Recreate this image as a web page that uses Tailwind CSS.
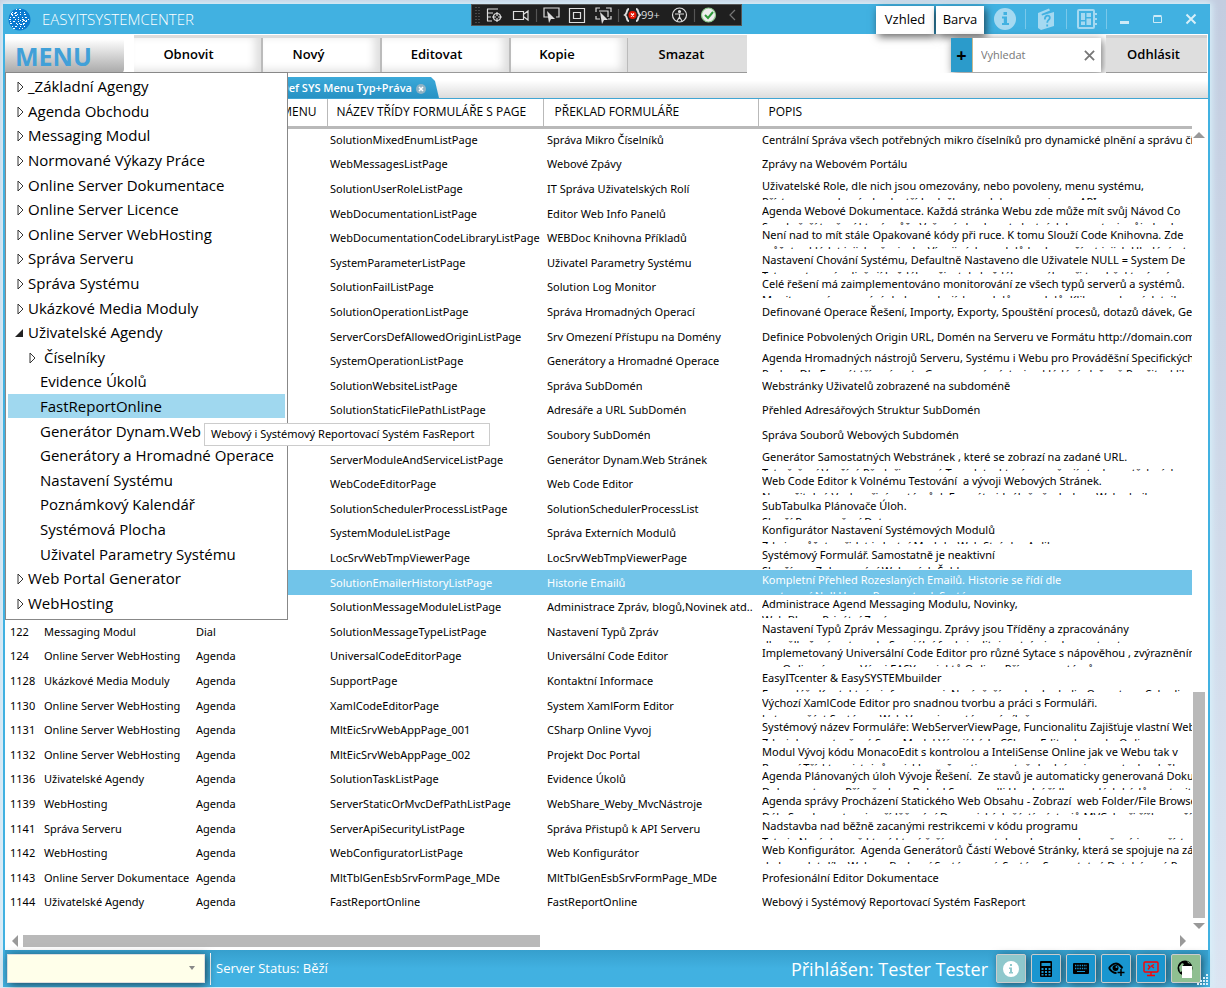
<!DOCTYPE html>
<html lang="cs">
<head>
<meta charset="utf-8">
<title>EASYITSYSTEMCENTER</title>
<meta name="viewport" content="width=device-width, initial-scale=1">
<script src="https://cdn.jsdelivr.net/npm/@tailwindcss/browser@4"></script>
</head>
<body class="h-screen overflow-hidden bg-linear-to-b from-[#c3cde0] to-[#dbe5f2] pt-1 pr-4 pb-px pl-[3px] font-['Open_Sans','Noto_Sans',sans-serif] text-xs text-black">
<div class="relative flex h-full flex-col border-x-2 border-[#41b1e1] bg-white shadow-[0_0_7px_2px_#d8f2fb]">

  <header class="flex h-[30px] shrink-0 items-center bg-[#41b1e1] text-white">
    <svg class="ml-[3px] size-[23px]" viewBox="0 0 23 23">
      <circle cx="11.500" cy="11.500" r="11" fill="#0c7bd0"/>
      <g fill="none" stroke="#fff" stroke-width="1">
        <path d="M8 1.500h8M4 4.500h15M2 9.500h19M2 13.500h20M4 18.500h15" stroke-dasharray="1 2 2 3 1 3"/>
        <path d="M3 6.500h17M1 11.500h21M2 15.500h18M5 20.500h13" stroke-dasharray="2 4 1 2 1 3"/>
        <path d="M3 5.500h6M4 7.500h5M12 12.500h8M9 16.500h9" stroke-dasharray="1 2 2 1"/>
      </g>
    </svg>
    <h1 class="ml-[11px] text-[15px] font-light">EASYITSYSTEMCENTER</h1>
    <div class="ml-auto flex h-full items-center text-white/60">
      <button class="mt-px h-7 w-[58px] bg-white text-[13px] text-black shadow-[2px_3px_8px_#0009]">Vzhled</button>
      <button class="mt-px ml-[2px] h-7 w-[48px] bg-white text-[13px] text-black shadow-[2px_3px_8px_#0009]">Barva</button>
      <button aria-label="Informace" class="flex h-5 w-[42px] items-center justify-center border-r border-white/30"><svg class="size-[22px] shrink-0 text-[#a5d9f1]" viewBox="0 0 22 22"><circle cx="11" cy="11" r="11" fill="currentColor"/><path d="M9.500 4h3.500v3H9.500zM8 8.500h5V15h2v2H8v-2h1.800v-4.500H8z" fill="#41b1e1"/></svg></button>
      <button aria-label="Nápověda" class="flex h-5 w-[41px] items-center justify-center border-r border-white/30"><svg class="size-[22px] shrink-0" viewBox="0 0 22 22"><path d="M3 5 14 .5l1 2L6.500 6l.5 1.500L19 4v14L6 22l-3-2z" fill="#a5d9f1"/><path d="M9.800 11.500c0-4.500 5-5 5-1.800 0 2.300-2.600 2-2.600 5m0 1.800v2" fill="none" stroke="#41b1e1" stroke-width="1.800"/></svg></button>
      <button aria-label="Moduly" class="flex h-5 w-[40px] items-center justify-center border-r border-white/30"><svg class="size-[22px] shrink-0" viewBox="0 0 22 22" fill="none" stroke="#a5d9f1" stroke-width="2"><rect x="2" y="2" width="16" height="18" rx="1"/><path d="M18 6h3M18 11h3M18 16h3"/><path d="M5 5h4v7H5zM10.500 5H15v4h-4.500zM5 13.500h4V17H5zM10.500 10.500H15V17h-4.500z" fill="#a5d9f1" stroke="none"/></svg></button>
      <button aria-label="Minimalizovat" class="flex w-[35px] justify-center"><svg class="size-3" viewBox="0 0 12 12"><path d="M1 8h9v3H1z" fill="#cdeaf7"/></svg></button>
      <button aria-label="Maximalizovat" class="flex w-[32px] justify-center"><svg class="size-3" viewBox="0 0 12 12" fill="none" stroke="#cdeaf7"><path d="M1.500 3.500h8v6h-8zM1.500 2.500h8"/></svg></button>
      <button aria-label="Zavřít" class="flex w-[34px] justify-center"><svg class="size-3" viewBox="0 0 12 12" fill="none" stroke="#d8eff9" stroke-width="2"><path d="m1.500 1.500 9 9m0-9-9 9"/></svg></button>
    </div>
  </header>

  <nav class="flex h-[39px] shrink-0 items-stretch pt-px text-[13px] font-semibold">
    <button class="mt-1 w-[119px] rounded-br bg-linear-to-b from-white to-[#a9a9a9] pl-[10px] text-left text-[25px] leading-8 font-bold text-[#41a0d8]">MENU</button>
    <div class="ml-[10px] flex border-t-3 border-b border-t-[#dcdcdc] border-b-[#999]">
      <button class="w-[129px] border-r-2 border-[#bbb] pr-[18px] shadow-[inset_-6px_-2px_8px_#0002]">Obnovit</button>
      <button class="w-[119px] border-r-2 border-[#bbb] pr-[26px] shadow-[inset_-6px_-2px_8px_#0002]">Nový</button>
      <button class="w-[129px] border-r-2 border-[#bbb] pr-[18px] shadow-[inset_-6px_-2px_8px_#0002]">Editovat</button>
      <button class="w-[117px] border-r border-[#bbb] pr-6 shadow-[inset_-6px_-2px_8px_#0002]">Kopie</button>
      <button class="w-[119px] bg-[#dedede] pr-3">Smazat</button>
    </div>
    <div class="my-[3px] mr-[5px] ml-auto flex h-[34px] w-[150px] shadow-[2px_2px_9px_#0008]">
      <button class="w-[22px] border-r border-[#c9b98f] bg-[#2b9bcb] text-lg leading-none font-bold">+</button>
      <label class="sr-only" for="q">Vyhledat</label>
      <input id="q" class="w-0 flex-1 bg-white pl-2 text-[11px] font-normal placeholder:text-[#777]" placeholder="Vyhledat">
      <button aria-label="Vymazat" class="flex w-6 items-center justify-center bg-white"><svg class="size-[11px]" viewBox="0 0 12 12" fill="none" stroke="#777" stroke-width="2"><path d="m1 1 10 10M11 1 1 11"/></svg></button>
    </div>
    <button class="mr-px w-[101px] border-t-3 border-b border-t-[#d0d0d0] border-b-[#999] bg-[#dedede] pr-[6px]">Odhlásit</button>
  </nav>

  <div class="flex h-[26px] shrink-0 items-end border-b border-[#41a5d3] bg-linear-to-b from-white from-30% to-[#dcdcdc]">
    <div class="flex h-[21px] w-[434px] items-center justify-end gap-1 bg-linear-to-b from-[#3ba9d9] to-[#2792c4] pt-[2px] pr-[13px] font-semibold text-white [clip-path:polygon(0_0,426px_0,430px_4px,434px_100%,0_100%)]">
      <span class="whitespace-nowrap text-[11px]">Def SYS Menu Typ+Práva</span>
      <button aria-label="Zavřít kartu"><svg class="size-[10px]" viewBox="0 0 10 10"><circle cx="5" cy="5" r="5" fill="#8fb3c5"/><path d="m3 3 4 4m0-4L3 7" stroke="#fff" stroke-width="1.500"/></svg></button>
    </div>
  </div>

  <main class="flex min-h-0 flex-1">
    <div class="flex min-w-0 flex-1 flex-col">
      <div class="min-w-0 overflow-hidden">
        <table class="w-full table-fixed border-collapse text-left font-['Noto_Sans','Open_Sans',sans-serif] text-[11px] whitespace-nowrap">
          <colgroup><col class="w-[36px]"><col class="w-[152px]"><col class="w-[134px]"><col class="w-[216px]"><col class="w-[215px]"><col></colgroup>
          <thead>
            <tr class="h-7 border-b-3 border-[#b9b9b9] font-['Open_Sans','Noto_Sans',sans-serif] text-xs [&>th]:font-medium">
              <th></th><th></th><th class="pr-[10px] text-right">MENU</th>
              <th class="border-l border-[#b9b9b9] pl-[9px]">NÁZEV TŘÍDY FORMULÁŘE S PAGE</th>
              <th class="border-l border-[#b9b9b9] pl-[11px]">PŘEKLAD FORMULÁŘE</th>
              <th class="border-l border-[#b9b9b9] pl-[10px]">POPIS</th>
            </tr>
          </thead>
          <tbody id="rows"></tbody>
        </table>
      </div>
      <div class="mt-auto mb-[3px] flex h-3 items-center">
        <svg class="ml-[7px] h-3 w-2" viewBox="0 0 8 12"><path d="M6 0v12L0 6z" fill="#999"/></svg>
        <div class="ml-[3px] h-3 w-[517px] bg-[#b9b9b9]"></div>
        <svg class="mr-1 ml-auto h-3 w-2" viewBox="0 0 8 12"><path d="M0 0v12l6-6z" fill="#999"/></svg>
      </div>
    </div>
    <div class="flex w-4 shrink-0 flex-col items-start pt-[33px] pb-[21px] pl-px">
      <svg class="h-[6px] w-3" viewBox="0 0 12 6"><path d="M0 6 6 0l6 6z" fill="#999"/></svg>
      <div class="mt-auto h-[226px] w-3 bg-[#b9b9b9]"></div>
      <svg class="mt-[5px] h-[6px] w-3" viewBox="0 0 12 6"><path d="M0 0h12L6 6z" fill="#999"/></svg>
    </div>
  </main>

  <footer class="flex h-[37px] shrink-0 items-center bg-linear-to-b from-[#369fcd] to-[#41b1e1] to-50% text-white">
    <label class="sr-only" for="sel">Výběr</label>
    <div class="relative ml-[2px] h-[29px] w-[198px] shadow-[2px_2px_9px_#0009]">
      <select id="sel" class="size-full appearance-none border border-[#ddd] bg-[#ffffea]"><option></option></select>
      <svg class="pointer-events-none absolute top-3 right-[10px] h-1 w-[6px]" viewBox="0 0 6 4"><path d="M0 0h6L3 4z" fill="#888"/></svg>
    </div>
    <div class="ml-[5px] h-8 border-l border-white"></div>
    <p class="ml-[5px] text-[13px] whitespace-pre">Server Status: Běží</p>
    <p class="mr-2 ml-auto text-lg">Přihlášen: Tester Tester</p>
    <div class="mr-[7px] flex gap-[5px] [&>button]:flex [&>button]:h-[29px] [&>button]:w-[30px] [&>button]:items-center [&>button]:justify-center [&>button]:rounded-xs [&>button]:border [&>button]:border-[#ccc] [&>button]:shadow-[2px_2px_8px_#0008]">
      <button aria-label="Informace" class="bg-[#8fc8cc]"><svg class="size-4" viewBox="0 0 16 16"><circle cx="8" cy="8" r="8" fill="#fff"/><path d="M7 3h2v2H7zM6 6.500h3V11h1v1.500H6V11h1V8H6z" fill="#8fc8cc"/></svg></button>
      <button aria-label="Kalkulačka" class="bg-[#1996d0]"><svg class="h-4 w-3" viewBox="0 0 12 16"><rect width="12" height="16" rx="1"/><path d="M1.500 2h9v3h-9zM1.500 7h2v2h-2zM5 7h2v2H5zM8.500 7h2v2h-2zM1.500 10h2v2h-2zM5 10h2v2H5zM8.500 10h2v2h-2zM1.500 13h2v1.500h-2zM5 13h2v1.500H5zM8.500 13h2v1.500h-2z" fill="#1996d0"/></svg></button>
      <button aria-label="Klávesnice" class="bg-[#1996d0]"><svg class="h-[11px] w-4" viewBox="0 0 16 11"><rect width="16" height="11" rx="1"/><path d="M2 2.500h12M2 5.500h12" stroke="#1996d0" stroke-width="1.300" stroke-dasharray="1.300 1"/><path d="M4 8.500h8" stroke="#1996d0"/></svg></button>
      <button aria-label="Náhled" class="bg-[#1996d0]"><svg class="h-[14px] w-[17px]" viewBox="0 0 17 14"><path d="M1 6Q7.500-2.500 14 5.500M1 6q3 5 7.500 5M13.500 5l.8 1.500" fill="none" stroke="#000" stroke-width="2"/><circle cx="7.500" cy="6" r="3"/><circle cx="8.500" cy="5" r="1" fill="#1996d0"/><path d="M13 7v7M9.500 10.500h7" stroke="#000" stroke-width="1.500"/></svg></button>
      <button aria-label="Vzdálená plocha" class="bg-[#1996d0]"><svg class="size-4" viewBox="0 0 16 16" fill="none" stroke="#f00" stroke-width="1.400"><rect x="1" y="1" width="14" height="10" rx="1"/><path d="M8 11v3M4 14.500h8M5 4l2 2-2 2.500M11 3.500 8.500 5 11 7"/></svg></button>
      <button aria-label="Web" class="bg-[#8fbf91]"><svg class="size-[18px]" viewBox="0 0 18 18"><circle cx="8" cy="8" r="7.500"/><path d="M2 7 5 3l2 1-2 3 1 4-3 1zM10 1l4 3-3-1z" fill="#8fbf91"/><path d="M5 6h10v12H5z" fill="#fff"/></svg></button>
    </div>
  </footer>
  <svg class="absolute right-0 bottom-[2px] size-[11px]" viewBox="0 0 11 11"><path d="M9 0h2v2H9zM6 3h2v2H6zM9 3h2v2H9zM3 6h2v2H3zM6 6h2v2H6zM9 6h2v2H9zM0 9h2v2H0zM3 9h2v2H3zM6 9h2v2H6zM9 9h2v2H9z" fill="#d9eff9"/></svg>

  <!-- Debugger toolbar floating over the title bar -->
  <div class="absolute top-0 left-[466px] flex h-[22px] w-[271px] items-center border border-[#555] bg-[#1f1f1f] text-[#ddd]">
    <svg class="h-[18px] w-full" viewBox="0 0 269 18" fill="none" stroke="currentColor" stroke-width="1.200">
      <path d="M4 1v17M7 1v17" stroke="#666" stroke-dasharray="1 2"/>
      <path d="M15 3h11M15.500 3v12M15 7h6M15 11h4M15 15h5"/><circle cx="25" cy="11" r="3.500"/><path d="M25 6v4M25 12v4M20 11h4M26 11h4"/>
      <path d="M41.500 5.500h10v8h-10zM52 8l4-3v9l-4-3"/>
      <path d="M64.500 3v13M146.500 3v13M222.500 3v13" stroke="#555"/>
      <path d="M78 11h-6V2h15v9h-3M97.500 2.500h15v14h-15zM101.500 6.500h7v6h-7zM128 2h-4v4M134 2h5v4M124 10v3h4M139 10v3h-3M127 5h9v6"/>
      <path d="m75 5 8 8h-4l-2 4zM128 6l8 8h-4l-2 4z" fill="currentColor" stroke="none"/>
      <path d="M157 3c-3 0-1 4-4 6 3 2 1 6 4 6M164 3c3 0 1 4 4 6-3 2-1 6-4 6" stroke-width="2"/><circle cx="160.500" cy="9" r="4" fill="#e51400" stroke="none"/><path d="m159 7.500 3 3m0-3-3 3" stroke="#fff"/>
      <circle cx="207.500" cy="9" r="7"/><circle cx="207.500" cy="5.500" r="1" fill="currentColor"/><path d="M203 8h9M207.500 8v3l-2.500 4M207.500 11l2.500 4"/>
      <circle cx="236.500" cy="9" r="7" fill="#eee" stroke="#8fca8f"/><path d="m233 9 3 3 5-6" stroke="#2e9b3a" stroke-width="2"/>
      <path d="m263 4-5 5 5 5" stroke="#777"/>
    </svg>
    <span class="absolute left-[169px] text-[11px]">99+</span>
  </div>

  <!-- Opened agenda menu -->
  <ul id="menu" class="absolute top-[68px] left-0 flex h-[548px] w-[283px] flex-col border border-[#888] bg-white px-[2px] pt-px pb-1 text-[15px] whitespace-nowrap"></ul>
  <div role="tooltip" class="absolute top-[419px] left-[199px] flex h-[23px] w-[286px] items-center border border-[#ccc] bg-white pl-[6px] font-['Noto_Sans','Open_Sans',sans-serif] text-[11px] whitespace-nowrap">Webový i Systémový Reportovací Systém FasReport</div>
</div>

<script>
const menu = [
  [0,'_Základní Agengy'],[0,'Agenda Obchodu'],[0,'Messaging Modul'],[0,'Normované Výkazy Práce'],[0,'Online Server Dokumentace'],[0,'Online Server Licence'],[0,'Online Server WebHosting'],[0,'Správa Serveru'],[0,'Správa Systému'],[0,'Ukázkové Media Moduly'],[3,'Uživatelské Agendy'],[1,'Číselníky'],[2,'Evidence Úkolů'],[4,'FastReportOnline'],[2,'Generátor Dynam.Web'],[2,'Generátory a Hromadné Operace'],[2,'Nastavení Systému'],[2,'Poznámkový Kalendář'],[2,'Systémová Plocha'],[2,'Uživatel Parametry Systému'],[0,'Web Portal Generator'],[0,'WebHosting']];
const shut = '<svg class="mt-[2px] h-3 w-[7px]" viewBox="0 0 7 12"><path d="M1 1v10l5-5z" fill="#fff" stroke="#333"/></svg>';
const open = '<svg class="mt-[2px] size-2" viewBox="0 0 8 8"><path d="M8 0v8H0z" fill="#222"/></svg>';
const pad = ['pl-[9px] gap-1', 'pl-[21px] gap-2', 'pl-8', 'pl-[7px] gap-[5px]', 'pl-8 bg-[#a0d8ef]'];
document.getElementById('menu').innerHTML = menu.map(([k, t]) =>
  `<li class="flex min-h-0 flex-1"><button class="flex w-full items-center text-left ${pad[k]}">${k < 2 ? shut : k === 3 ? open : ''}<span>${t}</span></button></li>`).join('');

const rows = [
  ['','','','SolutionMixedEnumListPage','Správa Mikro Číselníků','Centrální Správa všech potřebných mikro číselníků pro dynamické plnění a správu číselníků'],
  ['','','','WebMessagesListPage','Webové Zpávy','Zprávy na Webovém Portálu'],
  ['','','','SolutionUserRoleListPage','IT Správa Uživatelských Rolí','Uživatelské Role, dle nich jsou omezovány, nebo povoleny, menu systému,','Přístupy na webové obsahy třídy složky, moduly, a soupis pro API'],
  ['','','','WebDocumentationListPage','Editor Web Info Panelů','Agenda Webové Dokumentace. Každá stránka Webu zde může mít svůj Návod Co','Se zde řeší tvoření která může Vaše ní obsahovat vlastní dokumentaci svůj obsah pro další'],
  ['','','','WebDocumentationCodeLibraryListPage','WEBDoc Knihovna Příkladů','Není nad to mít stále Opakované kódy při ruce. K tomu Slouží Code Knihovna. Zde','můžete vkládat jejich přepis do. Více jiných modulů bude využívat jejich Hledání a tvorbu kódů'],
  ['','','','SystemParameterListPage','Uživatel Parametry Systému','Nastavení Chování Systému, Defaultně Nastaveno dle Uživatele NULL = System De','Tato nastavení ovlivňují každého uživatele každého nového při tvorbě, které má nastaveno'],
  ['','','','SolutionFailListPage','Solution Log Monitor','Celé řešení má zaimplementováno monitorování ze všech typů serverů a systémů.','Monitorovací mapování chyb ve zdrojích modulů a modulů. Klikem zobrazí detail'],
  ['','','','SolutionOperationListPage','Správa Hromadných Operací','Definované Operace Řešení, Importy, Exporty, Spouštění procesů, dotazů dávek, Generování'],
  ['','','','ServerCorsDefAllowedOriginListPage','Srv Omezení Přístupu na Domény','Definice Pobvolených Origin URL, Domén na Serveru ve Formátu http://domain.com'],
  ['','','','SystemOperationListPage','Generátory a Hromadné Operace','Agenda Hromadných nástrojů Serveru, Systému i Webu pro Prováděšní Specifických','Prokaz Dle Formát třízení po to Generované nástroje ukládání uloženě Použit a klik exekut Expo'],
  ['','','','SolutionWebsiteListPage','Správa SubDomén','Webstránky Uživatelů zobrazené na subdoméně'],
  ['','','','SolutionStaticFilePathListPage','Adresáře a URL SubDomén','Přehled Adresářových Struktur SubDomén'],
  ['','','','','Soubory SubDomén','Správa Souborů Webových Subdomén'],
  ['','','','ServerModuleAndServiceListPage','Generátor Dynam.Web Stránek','Generátor Samostatných Webstránek , které se zobrazí na zadané URL.','Tato řešení Využívá Předpřipravený Template, které se opěrají stavba potřebných'],
  ['','','','WebCodeEditorPage','Web Code Editor','Web Code Editor k Volnému Testování  a vývoji Webových Stránek.','Navyužitelné Vzoky přiní systémů, k Formátu ideálně všech dnes Webu knih'],
  ['','','','SolutionSchedulerProcessListPage','SolutionSchedulerProcessList','SubTabulka Plánovače Úloh.','Slouží Pro uspoření Dat'],
  ['','','','SystemModuleListPage','Správa Externích Modulů','Konfigurátor Nastavení Systémových Modulů','Zde je můžete přidat i vlastní Moduly, Web Stránky, Aplikace'],
  ['','','','LocSrvWebTmpViewerPage','LocSrvWebTmpViewerPage','Systémový Formulář. Samostatně je neaktivní','Slouží pro Zobrazování Webových Šablon'],
  ['','','','SolutionEmailerHistoryListPage','Historie Emailů','Kompletní Přehled Rozeslaných Emailů. Historie se řídí dle','nastavení Null Hours Parametru k Systému'],
  ['','','','SolutionMessageModuleListPage','Administrace Zpráv, blogů,Novinek atd..','Administrace Agend Messaging Modulu, Novinky,','Web Blogy, Privátní Zprávy'],
  ['122','Messaging Modul','Dial','SolutionMessageTypeListPage','Nastavení Typů Zpráv','Nastavení Typů Zpráv Messagingu. Zprávy jsou Tříděny a zpracovánány','dle nělkožení na typech. Speciální funkci editoj na trén iz ohnov utvartvo'],
  ['124','Online Server WebHosting','Agenda','UniversalCodeEditorPage','Universální Code Editor','Implemetovaný Universální Code Editor pro různé Sytace s nápověhou , zvýrazněním','pro Online úpravy, Vývoj EASY projektů Online, Příprava systémů'],
  ['1128','Ukázkové Media Moduly','Agenda','SupportPage','Kontaktní Informace','EasyITcenter &amp; EasySYSTEMbuilder','Formuláře Kontaktní a informace ni. Navíc řeší se ohodnoledin Operators, Cybedia, Zpaz'],
  ['1130','Online Server WebHosting','Agenda','XamlCodeEditorPage','System XamlForm Editor','Výchozí XamlCode Editor pro snadnou tvorbu a práci s Formuláři.','Je to součást Systému, Web Verze je systémová sílně'],
  ['1131','Online Server WebHosting','Agenda','MltEicSrvWebAppPage_001','CSharp Online Vyvoj','Systémový název Formuláře: WebServerViewPage, Funcionalitu Zajišťuje vlastní Web','Zdroj doc z vytvořené Serv. Model Vývojí kódu CSharp Editor konzoly, Online'],
  ['1132','Online Server WebHosting','Agenda','MltEicSrvWebAppPage_002','Projekt Doc Portal','Modul Vývoj kódu MonacoEdit s kontrolou a InteliSense Online jak ve Webu tak v','Rozumí Třískty existujeů a ziskla možnosti samostně doplní a sine, vystavby složkou sloh'],
  ['1136','Uživatelské Agendy','Agenda','SolutionTaskListPage','Evidence Úkolů','Agenda Plánovaných úloh Vývoje Řešení.  Ze stavů je automaticky generovaná Dokumentace','Dokumentace z Příspěvcku a Rokud Se provedli Uvední řídkov malých kódů nastavit pomo'],
  ['1139','WebHosting','Agenda','ServerStaticOrMvcDefPathListPage','WebShare_Weby_MvcNástroje','Agenda správy Procházení Statického Web Obsahu - Zobrazí  web Folder/File Browser','Dále Se zde nastavuje příděčování Dynamických částí nástrojů MVC, k při říška prožíti žad'],
  ['1141','Správa Serveru','Agenda','ServerApiSecurityListPage','Správa Přistupů k API Serveru','Nadstavba nad běžně zacanými restrikcemi v kódu programu','Tato je Navíc kromě které které řeší uze s postoby adresa a zabezpečené jsou přístupech API S'],
  ['1142','WebHosting','Agenda','WebConfiguratorListPage','Web Konfigurátor','Web Konfigurátor.  Agenda Generátorů Částí Webové Stránky, která se spojuje na základě','do komplet díky Web na Budoucí Systém nyní. Systém Samostatné Databázové Panely Ař'],
  ['1143','Online Server Dokumentace','Agenda','MltTblGenEsbSrvFormPage_MDe','MltTblGenEsbSrvFormPage_MDe','Profesionální Editor Dokumentace'],
  ['1144','Uživatelské Agendy','Agenda','FastReportOnline','FastReportOnline','Webový i Systémový Reportovací Systém FasReport']];
document.getElementById('rows').innerHTML = rows.map((r, i) => {
  const cells = r.slice(0, 5).map((c, j) => `<td class="${j === 4 ? 'pl-1' : j ? 'pl-[3px]' : 'pl-[5px]'} overflow-hidden">${c}</td>`).join('');
  const text = r[6]
    ? `<div class="h-[22px] overflow-hidden leading-4 whitespace-pre">${r[5]}<br>${r[6]}</div>`
    : `<div class="overflow-hidden leading-4 whitespace-pre">${r[5]}</div>`;
  // Row heights alternate so that five rows take 123 pixels
  const height = i % 5 === 1 || i % 5 === 4 ? 'h-6' : 'h-[25px]';
  return `<tr class="leading-4 ${height} ${i === 18 ? 'bg-[#71c4e9] text-white' : ''}">${cells}<td class="overflow-hidden pl-[4px]">${text}</td></tr>`;
}).join('');
</script>
</body>
</html>
